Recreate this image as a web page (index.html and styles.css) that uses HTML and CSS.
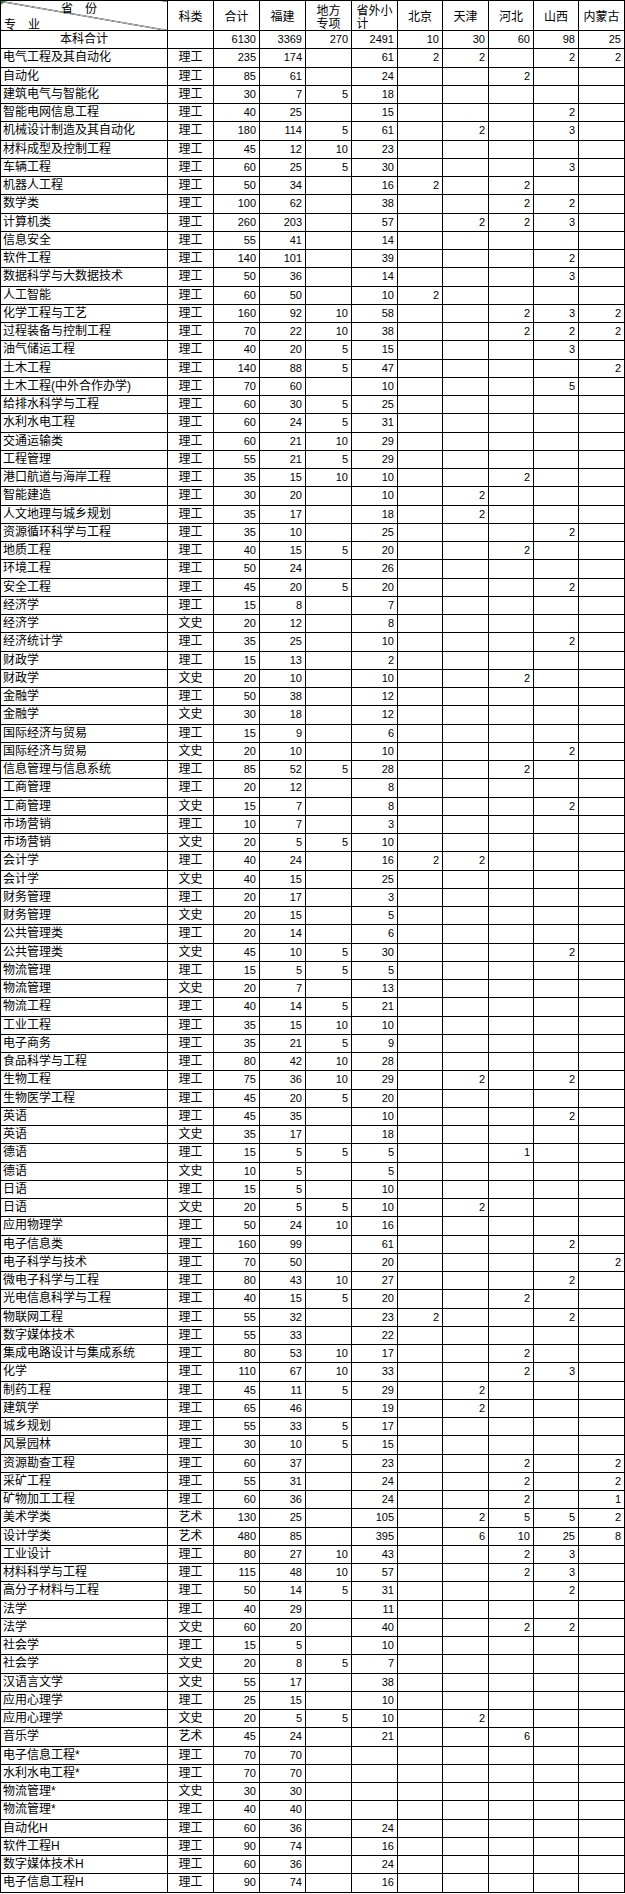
FILE: index.html
```html
<!DOCTYPE html>
<html lang="zh-CN">
<head>
<meta charset="utf-8">
<title>分省分专业招生计划</title>
<link rel="stylesheet" href="styles.css">
</head>
<body>
<table class="sheet">
<colgroup>
<col class="c-major"><col class="c-type"><col class="c-num"><col class="c-num"><col class="c-num"><col class="c-num"><col class="c-num5"><col class="c-num"><col class="c-num5"><col class="c-num5"><col class="c-num">
</colgroup>
<thead>
<tr>
<th class="corner"><div class="corner-box"><span class="prov">省　份</span><span class="major">专　业</span></div></th>
<th>科类</th><th>合计</th><th>福建</th><th><span class="wrap w2">地方专项</span></th><th><span class="wrap w3">省外小计</span></th><th>北京</th><th>天津</th><th>河北</th><th>山西</th><th>内蒙古</th>
</tr>
</thead>
<tbody>
<tr><td class="label">本科合计</td><td class="type"></td><td>6130</td><td>3369</td><td>270</td><td>2491</td><td>10</td><td>30</td><td>60</td><td>98</td><td>25</td></tr>
<tr><td class="name">电气工程及其自动化</td><td class="type">理工</td><td>235</td><td>174</td><td></td><td>61</td><td>2</td><td>2</td><td></td><td>2</td><td>2</td></tr>
<tr><td class="name">自动化</td><td class="type">理工</td><td>85</td><td>61</td><td></td><td>24</td><td></td><td></td><td>2</td><td></td><td></td></tr>
<tr><td class="name">建筑电气与智能化</td><td class="type">理工</td><td>30</td><td>7</td><td>5</td><td>18</td><td></td><td></td><td></td><td></td><td></td></tr>
<tr><td class="name">智能电网信息工程</td><td class="type">理工</td><td>40</td><td>25</td><td></td><td>15</td><td></td><td></td><td></td><td>2</td><td></td></tr>
<tr><td class="name">机械设计制造及其自动化</td><td class="type">理工</td><td>180</td><td>114</td><td>5</td><td>61</td><td></td><td>2</td><td></td><td>3</td><td></td></tr>
<tr><td class="name">材料成型及控制工程</td><td class="type">理工</td><td>45</td><td>12</td><td>10</td><td>23</td><td></td><td></td><td></td><td></td><td></td></tr>
<tr><td class="name">车辆工程</td><td class="type">理工</td><td>60</td><td>25</td><td>5</td><td>30</td><td></td><td></td><td></td><td>3</td><td></td></tr>
<tr><td class="name">机器人工程</td><td class="type">理工</td><td>50</td><td>34</td><td></td><td>16</td><td>2</td><td></td><td>2</td><td></td><td></td></tr>
<tr><td class="name">数学类</td><td class="type">理工</td><td>100</td><td>62</td><td></td><td>38</td><td></td><td></td><td>2</td><td>2</td><td></td></tr>
<tr><td class="name">计算机类</td><td class="type">理工</td><td>260</td><td>203</td><td></td><td>57</td><td></td><td>2</td><td>2</td><td>3</td><td></td></tr>
<tr><td class="name">信息安全</td><td class="type">理工</td><td>55</td><td>41</td><td></td><td>14</td><td></td><td></td><td></td><td></td><td></td></tr>
<tr><td class="name">软件工程</td><td class="type">理工</td><td>140</td><td>101</td><td></td><td>39</td><td></td><td></td><td></td><td>2</td><td></td></tr>
<tr><td class="name">数据科学与大数据技术</td><td class="type">理工</td><td>50</td><td>36</td><td></td><td>14</td><td></td><td></td><td></td><td>3</td><td></td></tr>
<tr><td class="name">人工智能</td><td class="type">理工</td><td>60</td><td>50</td><td></td><td>10</td><td>2</td><td></td><td></td><td></td><td></td></tr>
<tr><td class="name">化学工程与工艺</td><td class="type">理工</td><td>160</td><td>92</td><td>10</td><td>58</td><td></td><td></td><td>2</td><td>3</td><td>2</td></tr>
<tr><td class="name">过程装备与控制工程</td><td class="type">理工</td><td>70</td><td>22</td><td>10</td><td>38</td><td></td><td></td><td>2</td><td>2</td><td>2</td></tr>
<tr><td class="name">油气储运工程</td><td class="type">理工</td><td>40</td><td>20</td><td>5</td><td>15</td><td></td><td></td><td></td><td>3</td><td></td></tr>
<tr><td class="name">土木工程</td><td class="type">理工</td><td>140</td><td>88</td><td>5</td><td>47</td><td></td><td></td><td></td><td></td><td>2</td></tr>
<tr><td class="name">土木工程(中外合作办学)</td><td class="type">理工</td><td>70</td><td>60</td><td></td><td>10</td><td></td><td></td><td></td><td>5</td><td></td></tr>
<tr><td class="name">给排水科学与工程</td><td class="type">理工</td><td>60</td><td>30</td><td>5</td><td>25</td><td></td><td></td><td></td><td></td><td></td></tr>
<tr><td class="name">水利水电工程</td><td class="type">理工</td><td>60</td><td>24</td><td>5</td><td>31</td><td></td><td></td><td></td><td></td><td></td></tr>
<tr><td class="name">交通运输类</td><td class="type">理工</td><td>60</td><td>21</td><td>10</td><td>29</td><td></td><td></td><td></td><td></td><td></td></tr>
<tr><td class="name">工程管理</td><td class="type">理工</td><td>55</td><td>21</td><td>5</td><td>29</td><td></td><td></td><td></td><td></td><td></td></tr>
<tr><td class="name">港口航道与海岸工程</td><td class="type">理工</td><td>35</td><td>15</td><td>10</td><td>10</td><td></td><td></td><td>2</td><td></td><td></td></tr>
<tr><td class="name">智能建造</td><td class="type">理工</td><td>30</td><td>20</td><td></td><td>10</td><td></td><td>2</td><td></td><td></td><td></td></tr>
<tr><td class="name">人文地理与城乡规划</td><td class="type">理工</td><td>35</td><td>17</td><td></td><td>18</td><td></td><td>2</td><td></td><td></td><td></td></tr>
<tr><td class="name">资源循环科学与工程</td><td class="type">理工</td><td>35</td><td>10</td><td></td><td>25</td><td></td><td></td><td></td><td>2</td><td></td></tr>
<tr><td class="name">地质工程</td><td class="type">理工</td><td>40</td><td>15</td><td>5</td><td>20</td><td></td><td></td><td>2</td><td></td><td></td></tr>
<tr><td class="name">环境工程</td><td class="type">理工</td><td>50</td><td>24</td><td></td><td>26</td><td></td><td></td><td></td><td></td><td></td></tr>
<tr><td class="name">安全工程</td><td class="type">理工</td><td>45</td><td>20</td><td>5</td><td>20</td><td></td><td></td><td></td><td>2</td><td></td></tr>
<tr><td class="name">经济学</td><td class="type">理工</td><td>15</td><td>8</td><td></td><td>7</td><td></td><td></td><td></td><td></td><td></td></tr>
<tr><td class="name">经济学</td><td class="type">文史</td><td>20</td><td>12</td><td></td><td>8</td><td></td><td></td><td></td><td></td><td></td></tr>
<tr><td class="name">经济统计学</td><td class="type">理工</td><td>35</td><td>25</td><td></td><td>10</td><td></td><td></td><td></td><td>2</td><td></td></tr>
<tr><td class="name">财政学</td><td class="type">理工</td><td>15</td><td>13</td><td></td><td>2</td><td></td><td></td><td></td><td></td><td></td></tr>
<tr><td class="name">财政学</td><td class="type">文史</td><td>20</td><td>10</td><td></td><td>10</td><td></td><td></td><td>2</td><td></td><td></td></tr>
<tr><td class="name">金融学</td><td class="type">理工</td><td>50</td><td>38</td><td></td><td>12</td><td></td><td></td><td></td><td></td><td></td></tr>
<tr><td class="name">金融学</td><td class="type">文史</td><td>30</td><td>18</td><td></td><td>12</td><td></td><td></td><td></td><td></td><td></td></tr>
<tr><td class="name">国际经济与贸易</td><td class="type">理工</td><td>15</td><td>9</td><td></td><td>6</td><td></td><td></td><td></td><td></td><td></td></tr>
<tr><td class="name">国际经济与贸易</td><td class="type">文史</td><td>20</td><td>10</td><td></td><td>10</td><td></td><td></td><td></td><td>2</td><td></td></tr>
<tr><td class="name">信息管理与信息系统</td><td class="type">理工</td><td>85</td><td>52</td><td>5</td><td>28</td><td></td><td></td><td>2</td><td></td><td></td></tr>
<tr><td class="name">工商管理</td><td class="type">理工</td><td>20</td><td>12</td><td></td><td>8</td><td></td><td></td><td></td><td></td><td></td></tr>
<tr><td class="name">工商管理</td><td class="type">文史</td><td>15</td><td>7</td><td></td><td>8</td><td></td><td></td><td></td><td>2</td><td></td></tr>
<tr><td class="name">市场营销</td><td class="type">理工</td><td>10</td><td>7</td><td></td><td>3</td><td></td><td></td><td></td><td></td><td></td></tr>
<tr><td class="name">市场营销</td><td class="type">文史</td><td>20</td><td>5</td><td>5</td><td>10</td><td></td><td></td><td></td><td></td><td></td></tr>
<tr><td class="name">会计学</td><td class="type">理工</td><td>40</td><td>24</td><td></td><td>16</td><td>2</td><td>2</td><td></td><td></td><td></td></tr>
<tr><td class="name">会计学</td><td class="type">文史</td><td>40</td><td>15</td><td></td><td>25</td><td></td><td></td><td></td><td></td><td></td></tr>
<tr><td class="name">财务管理</td><td class="type">理工</td><td>20</td><td>17</td><td></td><td>3</td><td></td><td></td><td></td><td></td><td></td></tr>
<tr><td class="name">财务管理</td><td class="type">文史</td><td>20</td><td>15</td><td></td><td>5</td><td></td><td></td><td></td><td></td><td></td></tr>
<tr><td class="name">公共管理类</td><td class="type">理工</td><td>20</td><td>14</td><td></td><td>6</td><td></td><td></td><td></td><td></td><td></td></tr>
<tr><td class="name">公共管理类</td><td class="type">文史</td><td>45</td><td>10</td><td>5</td><td>30</td><td></td><td></td><td></td><td>2</td><td></td></tr>
<tr><td class="name">物流管理</td><td class="type">理工</td><td>15</td><td>5</td><td>5</td><td>5</td><td></td><td></td><td></td><td></td><td></td></tr>
<tr><td class="name">物流管理</td><td class="type">文史</td><td>20</td><td>7</td><td></td><td>13</td><td></td><td></td><td></td><td></td><td></td></tr>
<tr><td class="name">物流工程</td><td class="type">理工</td><td>40</td><td>14</td><td>5</td><td>21</td><td></td><td></td><td></td><td></td><td></td></tr>
<tr><td class="name">工业工程</td><td class="type">理工</td><td>35</td><td>15</td><td>10</td><td>10</td><td></td><td></td><td></td><td></td><td></td></tr>
<tr><td class="name">电子商务</td><td class="type">理工</td><td>35</td><td>21</td><td>5</td><td>9</td><td></td><td></td><td></td><td></td><td></td></tr>
<tr><td class="name">食品科学与工程</td><td class="type">理工</td><td>80</td><td>42</td><td>10</td><td>28</td><td></td><td></td><td></td><td></td><td></td></tr>
<tr><td class="name">生物工程</td><td class="type">理工</td><td>75</td><td>36</td><td>10</td><td>29</td><td></td><td>2</td><td></td><td>2</td><td></td></tr>
<tr><td class="name">生物医学工程</td><td class="type">理工</td><td>45</td><td>20</td><td>5</td><td>20</td><td></td><td></td><td></td><td></td><td></td></tr>
<tr><td class="name">英语</td><td class="type">理工</td><td>45</td><td>35</td><td></td><td>10</td><td></td><td></td><td></td><td>2</td><td></td></tr>
<tr><td class="name">英语</td><td class="type">文史</td><td>35</td><td>17</td><td></td><td>18</td><td></td><td></td><td></td><td></td><td></td></tr>
<tr><td class="name">德语</td><td class="type">理工</td><td>15</td><td>5</td><td>5</td><td>5</td><td></td><td></td><td>1</td><td></td><td></td></tr>
<tr><td class="name">德语</td><td class="type">文史</td><td>10</td><td>5</td><td></td><td>5</td><td></td><td></td><td></td><td></td><td></td></tr>
<tr><td class="name">日语</td><td class="type">理工</td><td>15</td><td>5</td><td></td><td>10</td><td></td><td></td><td></td><td></td><td></td></tr>
<tr><td class="name">日语</td><td class="type">文史</td><td>20</td><td>5</td><td>5</td><td>10</td><td></td><td>2</td><td></td><td></td><td></td></tr>
<tr><td class="name">应用物理学</td><td class="type">理工</td><td>50</td><td>24</td><td>10</td><td>16</td><td></td><td></td><td></td><td></td><td></td></tr>
<tr><td class="name">电子信息类</td><td class="type">理工</td><td>160</td><td>99</td><td></td><td>61</td><td></td><td></td><td></td><td>2</td><td></td></tr>
<tr><td class="name">电子科学与技术</td><td class="type">理工</td><td>70</td><td>50</td><td></td><td>20</td><td></td><td></td><td></td><td></td><td>2</td></tr>
<tr><td class="name">微电子科学与工程</td><td class="type">理工</td><td>80</td><td>43</td><td>10</td><td>27</td><td></td><td></td><td></td><td>2</td><td></td></tr>
<tr><td class="name">光电信息科学与工程</td><td class="type">理工</td><td>40</td><td>15</td><td>5</td><td>20</td><td></td><td></td><td>2</td><td></td><td></td></tr>
<tr><td class="name">物联网工程</td><td class="type">理工</td><td>55</td><td>32</td><td></td><td>23</td><td>2</td><td></td><td></td><td>2</td><td></td></tr>
<tr><td class="name">数字媒体技术</td><td class="type">理工</td><td>55</td><td>33</td><td></td><td>22</td><td></td><td></td><td></td><td></td><td></td></tr>
<tr><td class="name">集成电路设计与集成系统</td><td class="type">理工</td><td>80</td><td>53</td><td>10</td><td>17</td><td></td><td></td><td>2</td><td></td><td></td></tr>
<tr><td class="name">化学</td><td class="type">理工</td><td>110</td><td>67</td><td>10</td><td>33</td><td></td><td></td><td>2</td><td>3</td><td></td></tr>
<tr><td class="name">制药工程</td><td class="type">理工</td><td>45</td><td>11</td><td>5</td><td>29</td><td></td><td>2</td><td></td><td></td><td></td></tr>
<tr><td class="name">建筑学</td><td class="type">理工</td><td>65</td><td>46</td><td></td><td>19</td><td></td><td>2</td><td></td><td></td><td></td></tr>
<tr><td class="name">城乡规划</td><td class="type">理工</td><td>55</td><td>33</td><td>5</td><td>17</td><td></td><td></td><td></td><td></td><td></td></tr>
<tr><td class="name">风景园林</td><td class="type">理工</td><td>30</td><td>10</td><td>5</td><td>15</td><td></td><td></td><td></td><td></td><td></td></tr>
<tr><td class="name">资源勘查工程</td><td class="type">理工</td><td>60</td><td>37</td><td></td><td>23</td><td></td><td></td><td>2</td><td></td><td>2</td></tr>
<tr><td class="name">采矿工程</td><td class="type">理工</td><td>55</td><td>31</td><td></td><td>24</td><td></td><td></td><td>2</td><td></td><td>2</td></tr>
<tr><td class="name">矿物加工工程</td><td class="type">理工</td><td>60</td><td>36</td><td></td><td>24</td><td></td><td></td><td>2</td><td></td><td>1</td></tr>
<tr><td class="name">美术学类</td><td class="type">艺术</td><td>130</td><td>25</td><td></td><td>105</td><td></td><td>2</td><td>5</td><td>5</td><td>2</td></tr>
<tr><td class="name">设计学类</td><td class="type">艺术</td><td>480</td><td>85</td><td></td><td>395</td><td></td><td>6</td><td>10</td><td>25</td><td>8</td></tr>
<tr><td class="name">工业设计</td><td class="type">理工</td><td>80</td><td>27</td><td>10</td><td>43</td><td></td><td></td><td>2</td><td>3</td><td></td></tr>
<tr><td class="name">材料科学与工程</td><td class="type">理工</td><td>115</td><td>48</td><td>10</td><td>57</td><td></td><td></td><td>2</td><td>3</td><td></td></tr>
<tr><td class="name">高分子材料与工程</td><td class="type">理工</td><td>50</td><td>14</td><td>5</td><td>31</td><td></td><td></td><td></td><td>2</td><td></td></tr>
<tr><td class="name">法学</td><td class="type">理工</td><td>40</td><td>29</td><td></td><td>11</td><td></td><td></td><td></td><td></td><td></td></tr>
<tr><td class="name">法学</td><td class="type">文史</td><td>60</td><td>20</td><td></td><td>40</td><td></td><td></td><td>2</td><td>2</td><td></td></tr>
<tr><td class="name">社会学</td><td class="type">理工</td><td>15</td><td>5</td><td></td><td>10</td><td></td><td></td><td></td><td></td><td></td></tr>
<tr><td class="name">社会学</td><td class="type">文史</td><td>20</td><td>8</td><td>5</td><td>7</td><td></td><td></td><td></td><td></td><td></td></tr>
<tr><td class="name">汉语言文学</td><td class="type">文史</td><td>55</td><td>17</td><td></td><td>38</td><td></td><td></td><td></td><td></td><td></td></tr>
<tr><td class="name">应用心理学</td><td class="type">理工</td><td>25</td><td>15</td><td></td><td>10</td><td></td><td></td><td></td><td></td><td></td></tr>
<tr><td class="name">应用心理学</td><td class="type">文史</td><td>20</td><td>5</td><td>5</td><td>10</td><td></td><td>2</td><td></td><td></td><td></td></tr>
<tr><td class="name">音乐学</td><td class="type">艺术</td><td>45</td><td>24</td><td></td><td>21</td><td></td><td></td><td>6</td><td></td><td></td></tr>
<tr><td class="name">电子信息工程*</td><td class="type">理工</td><td>70</td><td>70</td><td></td><td></td><td></td><td></td><td></td><td></td><td></td></tr>
<tr><td class="name">水利水电工程*</td><td class="type">理工</td><td>70</td><td>70</td><td></td><td></td><td></td><td></td><td></td><td></td><td></td></tr>
<tr><td class="name">物流管理*</td><td class="type">文史</td><td>30</td><td>30</td><td></td><td></td><td></td><td></td><td></td><td></td><td></td></tr>
<tr><td class="name">物流管理*</td><td class="type">理工</td><td>40</td><td>40</td><td></td><td></td><td></td><td></td><td></td><td></td><td></td></tr>
<tr><td class="name">自动化H</td><td class="type">理工</td><td>60</td><td>36</td><td></td><td>24</td><td></td><td></td><td></td><td></td><td></td></tr>
<tr><td class="name">软件工程H</td><td class="type">理工</td><td>90</td><td>74</td><td></td><td>16</td><td></td><td></td><td></td><td></td><td></td></tr>
<tr><td class="name">数字媒体技术H</td><td class="type">理工</td><td>60</td><td>36</td><td></td><td>24</td><td></td><td></td><td></td><td></td><td></td></tr>
<tr><td class="name">电子信息工程H</td><td class="type">理工</td><td>90</td><td>74</td><td></td><td>16</td><td></td><td></td><td></td><td></td><td></td></tr>
</tbody>
</table>
</body>
</html>
```
FILE: styles.css
```css
html, body {
  margin: 0;
  padding: 0;
  background: #fff;
}

body {
  font-family: "Liberation Sans", "Noto Sans CJK SC", sans-serif;
  color: #000;
}

.sheet {
  border-collapse: collapse;
  table-layout: fixed;
  width: 625px;
  font-size: 12px;
}

.c-major { width: 167px; }
.c-type { width: 46px; }
.c-num { width: 46px; }
.c-num5 { width: 45px; }

.sheet th,
.sheet td {
  border: 1px solid #000;
  padding: 0 2px;
  line-height: 13px;
  overflow: hidden;
}

.sheet thead tr {
  height: 30px;
}

.sheet thead th {
  font-weight: normal;
  font-family: "Noto Sans CJK SC", sans-serif;
  font-size: 12px;
  text-align: center;
  vertical-align: middle;
  padding: 0 1px;
}

.wrap {
  display: inline-block;
  white-space: normal;
  word-break: break-all;
  text-align: left;
  line-height: 13px;
  vertical-align: middle;
}

.wrap.w2 { width: 24px; }
.wrap.w3 { width: 36px; }

.sheet tbody tr {
  height: 18.26px;
}

.sheet td {
  text-align: right;
  vertical-align: middle;
  font-size: 11px;
  white-space: nowrap;
  padding: 0 3px 0 1px;
}

.sheet td.name {
  text-align: left;
  font-size: 12px;
  padding: 0 1px 0 2px;
}

.sheet td.type {
  text-align: center;
  font-size: 12px;
  padding: 0;
}

.sheet td.label {
  text-align: center;
  font-size: 12px;
  padding: 0;
}

.sheet th.corner {
  position: relative;
  padding: 0 2px 0 3px;
  background: linear-gradient(to top right, transparent calc(50% - 0.7px), #000 50%, transparent calc(50% + 0.7px));
}

.sheet th.corner::before {
  content: "";
  position: absolute;
  left: 0;
  top: 0;
  border-top: 4px solid #2e8b3a;
  border-right: 4px solid transparent;
}

.corner-box {
  display: flex;
  flex-direction: column;
  justify-content: space-between;
  height: 29px;
}

.prov {
  align-self: flex-end;
  margin-right: 68px;
  line-height: 13px;
}

.major {
  align-self: flex-start;
  line-height: 13px;
}
```
